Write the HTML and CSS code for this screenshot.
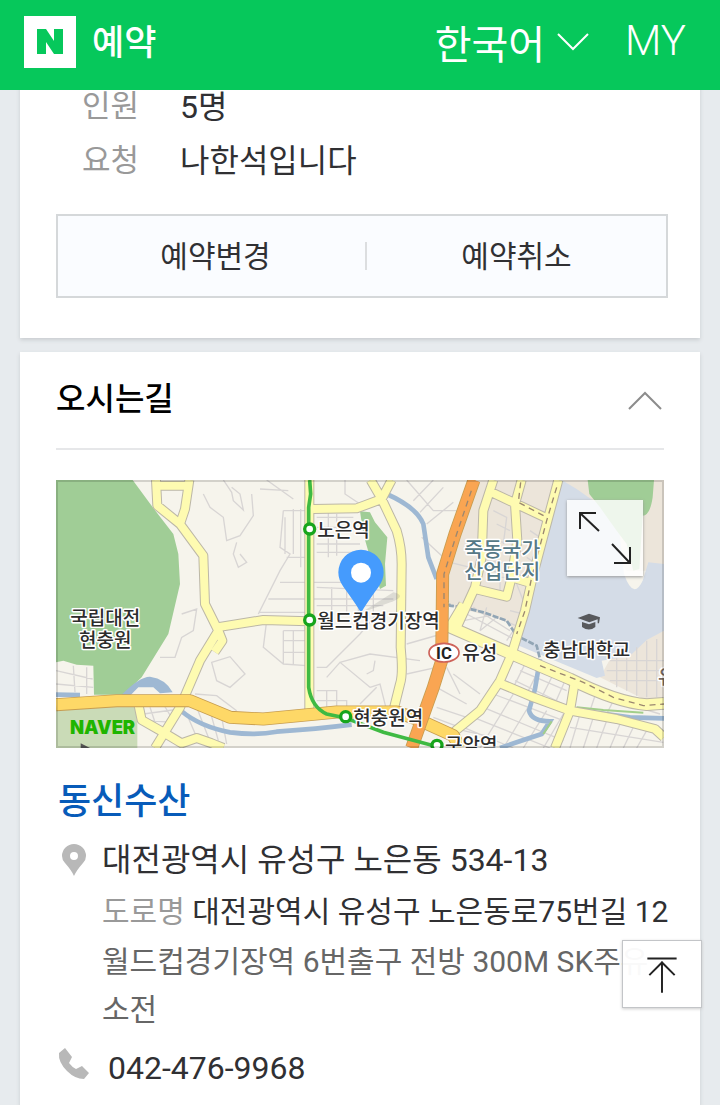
FILE: index.html
```html
<!DOCTYPE html>
<html lang="ko">
<head>
<meta charset="utf-8">
<meta name="viewport" content="width=device-width, initial-scale=1">
<title>네이버 예약</title>
<link rel="stylesheet" href="styles.css">
</head>
<body>
<header class="top-bar">
  <a class="brand" href="#home">
    <svg class="brand-mark" viewBox="0 0 52 52" aria-label="NAVER"><path d="M0 0H52V52H0Z" fill="#fff"/><path d="M13 13H22L30 25V13H39V38H30L22 26V38H13Z" fill="#06c85b"/></svg>
    <span>예약</span>
  </a>
  <nav class="top-menu">
    <button class="language" type="button">한국어
      <svg class="chevron" viewBox="0 0 32 18"><path d="M1 1 16 16 31 1"/></svg>
    </button>
    <a class="my" href="#my">MY</a>
  </nav>
</header>

<main class="page">
  <section class="card booking">
    <dl class="facts">
      <dt>인원</dt><dd>5명</dd>
      <dt>요청</dt><dd>나한석입니다</dd>
    </dl>
    <div class="actions">
      <button type="button">예약변경</button>
      <button type="button">예약취소</button>
    </div>
  </section>

  <section class="card directions">
    <div class="card-head">
      <h2>오시는길</h2>
      <button class="fold" type="button" aria-label="접기"><svg class="chevron" viewBox="0 0 34 20"><path d="M1 18 17 2 33 18"/></svg></button>
    </div>
    <div class="map">
      <svg class="map-art" viewBox="18 18 1824 804" role="img" aria-label="지도">
        <defs>
          <path id="local" d="M318 18 322 95 390 150 460 245 465 390 505 470 450 560 390 700 315 822M418 18 405 105 390 150M318 35H418M505 470 517 500 494 534M500 460 640 438 775 442M265 690 275 738 340 775 395 808 440 792 485 808 520 822M778 18V715M790 105 920 103 995 75 1040 170Q1055 220 1055 270L1052 520Q1060 600 1050 630L1030 710M962 18 995 75 1025 18M1330 18 1300 110 1295 250 1275 340 1220 460M1310 48 1495 135M1415 18 1395 90 1402 200 1385 310 1370 368 1275 345M1385 310 1435 325M1525 18 1495 130 1450 300 1425 410 1385 540 1350 620 1290 710 1190 792M1195 465 1240 390M1350 628 1450 670 1560 710 1700 735 1815 765 1842 790M1575 620 1560 710 1515 822"/>
          <path id="wide" d="M1190 455 1385 540 1560 615Q1700 685 1790 692L1842 688"/>
          <path id="arterial" d="M18 692 200 680H420L540 730 640 735 860 714H1040L1100 735 1210 785 1230 822"/>
          <path id="highway" d="M1272 18 1215 180 1178 300 1175 560 1150 640 1085 822"/>
        </defs>
        <path fill="#f6f4ec" d="M18 18H1842V822H18Z"/>
        <path fill="#ece5da" d="M1272 18H1842V290H1730L1525 40 1440 360 1405 490 1370 440 1200 395 1178 340ZM1700 520 1842 470V680L1780 675 1650 610Z"/>
        <path fill="#d4dce7" d="M1535 18 1580 45 1630 80 1700 100 1722 300Q1750 380 1778 320L1795 265 1842 270V470L1790 498 1740 545 1655 560 1665 605 1640 612 1400 512Z"/>
        <path fill="#a0cd96" d="M18 18H248L312 105 370 180 385 240 390 330 355 480 275 610 220 662H132L130 575 80 572 40 560 18 565ZM930 112 960 115 975 145 1012 190 1005 270 1008 335 990 345 960 250 940 180ZM1613 18H1812L1808 70Q1800 125 1778 125L1768 285 1750 290 1730 210 1700 170 1650 100 1618 60Z"/>
        <path fill="#cadbb7" d="M18 700 255 690 262 750V822H18Z"/>
        <g class="streets">
          <path d="M18 590 128 615M70 575 75 655M110 580V660M18 630 130 640M520 18 545 55 550 80 580 108 570 60 545 40M460 60 480 100 520 130 530 200 570 185 610 125 605 60M560 205 550 240 565 280 590 265 570 240M395 420 440 405 430 470 395 490 375 550 330 550M485 565 540 548 585 600 540 640 500 620ZM280 720 390 705M290 740 370 745M300 700 320 760M340 690 370 740M410 720 440 790M440 700 475 790M480 710 505 800M515 730 530 810M435 660 500 665 560 710M630 45 715 50M650 18 730 75M700 110 690 220 720 240 690 290 625 420M700 110H765M705 130V240M730 105V240M752 105V280M710 250H765M690 325H990M655 375H1030M625 415H765M650 440 640 520 700 570 770 575M700 470H765M700 470V570M730 470V570M700 500H765M700 535H765M800 130H910M800 160H890M800 210H930M800 235H940M835 110V250M860 120V245M800 340 1030 350M800 395H1000M845 340V425M890 340V425M925 340V425M970 340V425M800 580 830 580 930 480 980 420M830 610 870 565 960 640M870 565 960 540 1110 560M975 560 970 590 950 600M960 640 990 630 1010 710M980 640 930 690M800 650H860V700M800 680H890V705M830 650V705M885 18V60L930 90M1070 18 1150 110 1220 110M1090 80 1150 18M1110 115 1180 40M1130 150 1210 85M1115 190 1180 250M1070 510 1175 480M1070 600 1160 580M1160 640 1250 690M1190 580 1230 660M1210 600 1290 660M1160 700 1250 730M1150 730 1230 760"/>
          <path d="M1250 420 1400 500M1270 400 1380 470M1290 470 1340 430 1410 460M1240 440 1320 425M1370 500 1410 440M1310 400 1290 470M1405 550 1555 620M1410 590 1550 650M1395 620 1540 690M1430 560 1390 640M1470 580 1430 660M1510 600 1470 680M1545 620 1510 700M1330 660 1540 740M1300 700 1540 800M1270 730 1500 822M1240 760 1390 822M1390 660 1290 822M1440 690 1360 822M1490 710 1420 822M1540 720 1480 822M1240 770 1330 790M1600 650 1830 720M1640 650 1620 710M1690 680 1670 720M1560 760 1840 805M1590 720 1560 822M1630 730 1600 822M1670 740 1640 822M1710 750 1680 822M1750 760 1720 822M1790 770 1760 822M1680 560H1842M1670 590H1842M1680 620H1842M1700 530V640M1730 540V650M1760 520V665M1790 500V670M1820 495V670M1330 110 1370 130 1360 210M1340 150 1380 170M1330 200 1390 210M1310 260 1380 270M1320 290 1375 300M1430 110 1480 140M1440 170 1470 190M1430 250 1460 270M1400 330 1420 380M1380 410 1420 420M1200 265 1280 285M1350 300V360M1330 310H1380"/>
        </g>
        <path fill="#9eb8d3" d="M215 662Q270 607 300 608 348 615 368 655L330 658 310 640 265 640 240 665Z"/>
        <g class="water">
          <path d="M395 712Q450 758 540 775 620 785 680 773 800 765 905 752M1010 60Q1100 100 1120 150L1135 250 1160 315M1470 555 1455 645 1437 710Q1445 742 1500 742L1475 780 1400 805 1350 822M1575 712 1650 718 1740 730 1842 733M18 662 90 663"/>
          <path class="brook" d="M1185 370 1200 395 1240 400 1300 415 1370 440 1400 485 1460 515 1470 555"/>
        </g>
        <path fill="none" stroke="#a2cf8a" stroke-width="6" d="M1580 700 1660 708 1780 716M1505 742 1480 780"/>
        <use class="edge" href="#local"/><use class="edge edge-wide" href="#wide"/>
        <use class="road" href="#local"/><use class="road road-wide" href="#wide"/>
        <use class="edge edge-main" href="#arterial"/><use class="road road-main" href="#arterial"/>
        <use class="edge edge-main" href="#highway"/><use class="road road-express" href="#highway"/>
        <path class="rail" d="M1520 40 1490 140 1445 310 1425 410 1400 480M1470 575 1600 625 1690 670 1780 695 1842 690M1412 25 1405 85 1490 130M1264 50 1220 180 1182 300 1182 400"/>
        <path class="subway" d="M779 18 782 60 776 100V640Q785 700 830 720L887 732 1000 775 1162 818"/>
        <g fill="#fff" stroke="#17a51c" stroke-width="10"><circle cx="779" cy="165" r="15"/><circle cx="779" cy="438" r="15"/><circle cx="887" cy="728" r="15"/><circle cx="1161" cy="814" r="15"/></g>
        <path fill="#777" opacity=".2" d="M933 416 1030 355Q1070 365 1030 382Z"/>
        <path fill="#459bfd" d="M933 417Q925 400 880 338 865 318 865 295A68 68 0 0 1 1001 295Q1001 318 986 338 941 400 933 417Z"/><circle cx="933" cy="296" r="30" fill="#fff"/>
        <g class="place">
          <text x="802" y="188">노은역</text><text x="802" y="463">월드컵경기장역</text><text x="910" y="752">현충원역</text><text x="1185" y="835">구암역</text>
          <text x="166" y="453" text-anchor="middle">국립대전</text><text x="166" y="518" text-anchor="middle">현충원</text>
          <text x="1237" y="559">유성</text><text x="1610" y="549" text-anchor="middle">충남대학교</text><text class="faint" x="1824" y="630">유</text>
          <g class="district"><text x="1357" y="250" text-anchor="middle">죽동국가</text><text x="1357" y="314" text-anchor="middle">산업단지</text></g>
        </g>
        <ellipse cx="1182" cy="536" rx="45" ry="28" fill="#fff" stroke="#cd6259" stroke-width="5"/>
        <text class="ic" x="1182" y="554" text-anchor="middle">IC</text>
        <path fill="#58595c" d="M1583 432 1617 419 1650 430 1647 448H1643V436L1618 445ZM1596 444 1617 451 1636 444V459Q1617 474 1596 459Z"/>
        <path fill="#555" d="M92 808 120 822H92Z"/>
        <text class="watermark" x="60" y="779">NAVER</text>
        <path fill="none" stroke="#000" stroke-opacity=".14" stroke-width="6" d="M21 21H1839V819H21Z"/>
      </svg>
      <button class="expand" type="button" aria-label="지도 확대"><svg viewBox="0 0 76 76"><path d="M13 29V13H29M13 13 32 31M45 44 63 63M47 63H63V47"/></svg></button>
    </div>
    <h3 class="shop"><a href="#shop">동신수산</a></h3>
    <div class="contact">
      <svg class="contact-icon" viewBox="0 0 32 32"><path fill="#b8b8b8" fill-rule="evenodd" d="M16 32Q14 27 7 19 4 16 4 12A12 12 0 0 1 28 12Q28 16 25 19 18 27 16 32ZM16 8A4 4 0 1 0 16 16 4 4 0 1 0 16 8Z"/></svg>
      <address class="address">
        <p class="lot">대전광역시 유성구 노은동 534-13</p>
        <p class="street"><span>도로명</span> 대전광역시 유성구 노은동로75번길 12</p>
        <p class="hint">월드컵경기장역 6번출구 전방 300M SK주유소전</p>
      </address>
    </div>
    <div class="contact phone">
      <svg class="contact-icon" viewBox="0 0 32 32"><path fill="#b8b8b8" d="M1 5 7 0 14 9 11 15Q14 19 18 21L24 18 31 25 26 31Q17 31 9 23 0 14 1 5Z"/></svg>
      <a href="tel:042-476-9968">042-476-9968</a>
    </div>
  </section>
</main>

<button class="to-top" type="button" aria-label="맨 위로"><svg viewBox="0 0 80 68"><path d="M25 18H55M40 53V21M27 35 40 22 53 35"/></svg></button>
</body>
</html>
```
FILE: styles.css
```css
* { box-sizing: border-box; }
body {
  margin: 0;
  background: #e7ebee;
  color: #303033;
  font-family: Roboto, "Noto Sans CJK KR", sans-serif;
  font-size: 32px;
  font-weight: 400;
}
h2, h3, p, dl, dd { margin: 0; }
a { color: inherit; text-decoration: none; }
button { padding: 0; border: 0; background: none; color: inherit; font: inherit; }
svg { display: block; }

.top-bar {
  position: fixed;
  z-index: 2;
  top: 0;
  left: 0;
  right: 0;
  display: flex;
  align-items: center;
  justify-content: space-between;
  height: 90px;
  padding: 0 34px 6px 24px;
  background: #06c85b;
  color: #fff;
}
.brand { display: flex; align-items: center; gap: 16px; font-size: 35px; font-weight: 500; }
.brand span { padding-bottom: 6px; }
.brand-mark { width: 52px; height: 52px; }
.top-menu { display: flex; align-items: center; gap: 36px; font-size: 40px; }
.language { display: flex; align-items: center; gap: 12px; }
.chevron { fill: none; stroke: currentColor; stroke-width: 2; }
.language .chevron { width: 32px; height: 18px; }
.my { padding-bottom: 4px; font-size: 42px; font-weight: 300; }

.page { display: flex; flex-direction: column; gap: 14px; min-height: 100vh; padding: 80px 20px 0; }
.card { background: #fff; box-shadow: 0 2px 4px #c9cdd0; }
.booking { padding-bottom: 40px; }
.facts { display: grid; grid-template-columns: 98px 1fr; padding: 0 36px 0 62px; line-height: 54px; }
.facts dt { color: #999; font-size: 31px; }
.actions { display: flex; align-items: center; height: 84px; margin: 26px 32px 0 36px; border: 2px solid #d5d8da; background: #fafcff; }
.actions button { flex: 1; height: 28px; padding-left: 8px; font-size: 30px; line-height: 30px; }
.actions button + button { padding: 0; border-left: 2px solid #dcdee0; }

.directions { flex: 1; padding: 0 36px 8px; }
.card-head { display: flex; align-items: center; justify-content: space-between; height: 98px; padding-bottom: 2px; border-bottom: 2px solid #e6e7e9; }
.card-head h2 { padding-bottom: 6px; color: #000; font-size: 32px; font-weight: 500; }
.fold { padding: 4px 2px 0 0; color: #8c8c8c; }
.fold .chevron { width: 34px; height: 20px; }

.map { position: relative; margin-top: 30px; }
.map-art { width: 100%; height: auto; }
.streets { fill: none; stroke: #d8d5d4; stroke-width: 4; }
.water { fill: none; stroke: #9eb8d3; stroke-width: 14; }
.brook { stroke: #91a5b5; stroke-width: 8; stroke-dasharray: 18 5; }
.edge { fill: none; stroke: #bcb7a7; stroke-width: 30; stroke-linejoin: round; }
.edge-wide { stroke-width: 38; }
.edge-main { stroke: #c79d50; stroke-width: 39; }
.road { fill: none; stroke: #fefbb1; stroke-width: 24; stroke-linejoin: round; }
.road-wide { stroke-width: 32; }
.road-main { stroke: #fed867; stroke-width: 34; }
.road-express { stroke: #f9a552; stroke-width: 34; }
.rail { fill: none; stroke: #9b8770; stroke-width: 4; stroke-dasharray: 18 14; }
.subway { fill: none; stroke: #3fba43; stroke-width: 11; }
.place { fill: #2c2c2c; stroke: #fff; stroke-width: 9; paint-order: stroke; stroke-linejoin: round; font-size: 57px; font-weight: 500; }
.district { fill: #567987; font-size: 62px; }
.faint { fill: #77695f; }
.ic { fill: #222; font-size: 50px; font-weight: 700; }
.watermark { fill: #1fb500; font-family: Inter, sans-serif; font-size: 55px; font-weight: 900; }
.expand { position: absolute; top: 20px; right: 21px; width: 76px; height: 76px; background: rgba(255, 255, 255, .82); box-shadow: 0 1px 3px #999; }
.expand path, .to-top path { fill: none; stroke: #222; stroke-width: 2; }

.shop { margin: 30px 0 8px 2px; color: #075bb9; font-size: 36px; font-weight: 500; line-height: 48px; }
.contact { display: grid; grid-template-columns: 32px 1fr; column-gap: 14px; align-items: start; line-height: 52px; }
.contact-icon { width: 32px; height: 32px; margin-top: 10px; margin-left: 2px; }
.address { margin-right: -8px; font-style: normal; word-break: break-all; }
.street { font-size: 30px; }
.street span { color: #999; }
.hint { color: #666; font-size: 30px; line-height: 48px; }
.phone { column-gap: 20px; margin-top: 8px; }
.phone .contact-icon { margin-top: 6px; }

.to-top { position: fixed; right: 18px; bottom: 97px; width: 80px; height: 68px; border: 1px solid #c3c5c8; background: rgba(255, 255, 255, .96); box-shadow: 0 1px 3px #ccc; }
```
